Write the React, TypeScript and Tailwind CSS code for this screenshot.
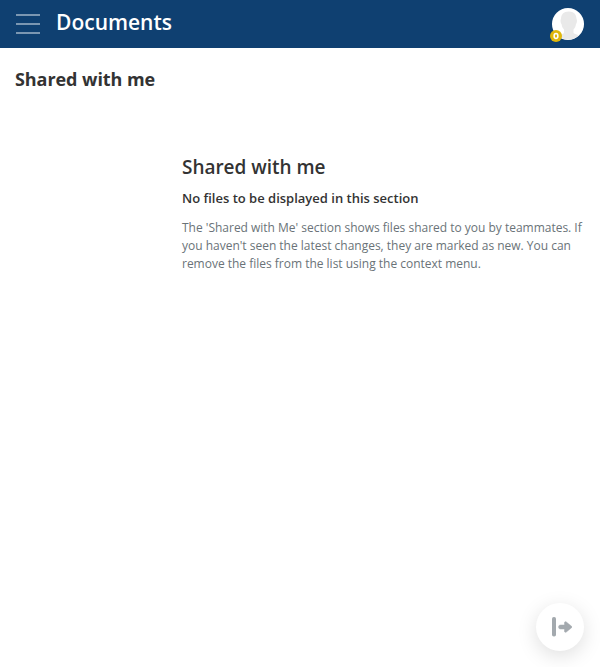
export default function App() {
  return (
    <div className="relative flex h-[667px] w-[600px] flex-col overflow-hidden bg-white font-['Open_Sans',sans-serif] text-[#333333]">
      <header className="flex h-12 shrink-0 items-center bg-[#0f4071] px-4">
        <button aria-label="Menu" className="flex h-5 w-6 flex-col justify-between">
          <span className="h-0.5 w-6 bg-[#7b97b2]" />
          <span className="h-0.5 w-6 bg-[#7b97b2]" />
          <span className="h-0.5 w-6 bg-[#7b97b2]" />
        </button>
        <h1 className="ml-4 pb-1 text-[21px] leading-7 font-semibold text-white">Documents</h1>
        <div className="relative ml-auto h-8 w-8">
          <svg viewBox="0 0 32 32" className="h-8 w-8">
            <circle cx="16" cy="16" r="16" fill="#fff" />
            <path d="M16.800 3.500C11.500 3.500 9 6.500 9 11c-.8.500-.5 4 .5 5 .5 2.500 1 4 2.500 5.500V25c-1.500 1.500-4 1.500-6.500 2.500a16 16 0 0 0 21.500-.2c-2-1-4-1-5.500-2.300v-3.500c1.500-1.500 2-3 2.500-5.500 1-1 1.300-4.500.5-5 0-4.500-2.500-7.500-7.700-7.500Z" fill="#e9e9e9" />
          </svg>
          <svg viewBox="0 0 12 12" className="absolute bottom-[-2px] left-[-2px] h-3 w-3">
            <circle cx="6" cy="6" r="6" fill="#e0b70b" />
            <ellipse cx="6" cy="6" rx="1.900" ry="2.400" fill="none" stroke="#fff" strokeWidth="1.500" />
          </svg>
        </div>
      </header>
      <main className="flex flex-col">
        <h2 className="px-[15px] pt-[19px] text-[18px] leading-6 font-bold tracking-[-0.06px]">Shared with me</h2>
        <section className="ml-[182px] mt-[63px] w-[410px]">
          <h3 className="text-[19px] leading-[26px] font-semibold tracking-[-0.03px]">Shared with me</h3>
          <p className="mt-[9px] text-[13px] leading-[18px] font-semibold">No files to be displayed in this section</p>
          <p className="mt-3 text-[12px] leading-[18px] tracking-[-0.01px] text-[#6a7378]">
            The 'Shared with Me' section shows files shared to you by teammates. If you haven't seen the latest changes, they are marked as new. You can remove the files from the list using the context menu.
          </p>
        </section>
      </main>
      <button aria-label="Open panel" className="absolute right-4 bottom-4 flex h-12 w-12 items-center justify-center rounded-full bg-white shadow-[0_5px_20px_rgba(0,0,0,0.13)]">
        <svg viewBox="0 0 24 20" className="h-5 w-6" fill="#a3a9ae">
          <rect x="4" y="0" width="4" height="19.500" rx="1.800" />
          <path d="M12.500 8H16.500V5.800c0-1.200 1-1.500 1.800-.8l5.200 4.200c.5.400.5 1.200 0 1.600L18.300 15c-.8.700-1.800.4-1.800-.8V12H12.500a2 2 0 0 1 0-4Z" stroke="#a3a9ae" strokeWidth=".5" />
        </svg>
      </button>
    </div>
  );
}
